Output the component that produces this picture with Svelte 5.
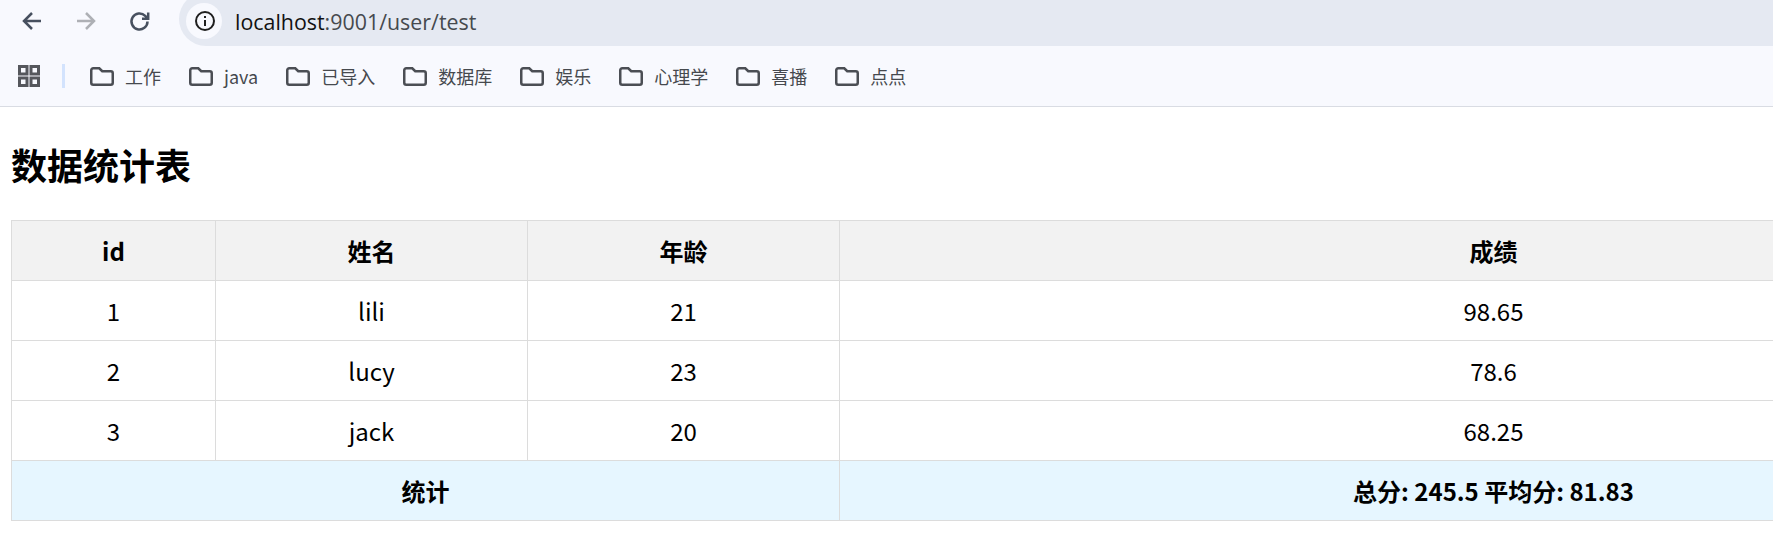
<script>
	const bookmarks = ['工作', 'java', '已导入', '数据库', '娱乐', '心理学', '喜播', '点点'];
	const rows = [
		{ id: 1, name: 'lili', age: 21, score: 98.65 },
		{ id: 2, name: 'lucy', age: 23, score: 78.6 },
		{ id: 3, name: 'jack', age: 20, score: 68.25 }
	];
	const total = 245.5;
	const average = 81.83;
</script>

<div class="chrome">
	<div class="toolbar">
		<div class="nav">
			<svg class="nav-icon" viewBox="0 0 24 24" aria-hidden="true">
				<path d="M21 12H4.5M12 4 4 12l8 8" />
			</svg>
			<svg class="nav-icon off" viewBox="0 0 24 24" aria-hidden="true">
				<path d="M3 12h16.5M12 4l8 8-8 8" />
			</svg>
			<svg class="nav-icon" viewBox="0 0 24 24" aria-hidden="true">
				<path d="M19.5 12.5a8 8 0 1 1-2.3-5.6L20 9.5M20.2 3.5v6.2H14" />
			</svg>
		</div>
		<div class="omnibox">
			<span class="site-info">
				<svg viewBox="0 0 24 24" aria-hidden="true">
					<circle cx="12" cy="12" r="9" />
					<path d="M12 11v6M12 7v2" />
				</svg>
			</span>
			<span class="url"><b>localhost</b>:9001/user/test</span>
		</div>
	</div>
	<div class="bookmarks">
		<svg class="apps" viewBox="0 0 22 22" aria-hidden="true">
			<rect x="1.5" y="1.5" width="7.5" height="7.5" />
			<rect x="13" y="1.5" width="7.5" height="7.5" />
			<rect x="1.5" y="13" width="7.5" height="7.5" />
			<rect x="13" y="13" width="7.5" height="7.5" />
		</svg>
		<span class="divider"></span>
		{#each bookmarks as label}
			<span class="bookmark">
				<svg viewBox="0 0 24 19" aria-hidden="true">
					<path d="M1.25 3.25a2 2 0 0 1 2-2h6l3 3h8.5a2 2 0 0 1 2 2v9.5a2 2 0 0 1-2 2H3.25a2 2 0 0 1-2-2z" />
				</svg>
				{label}
			</span>
		{/each}
	</div>
</div>

<main>
	<h2>数据统计表</h2>
	<table>
		<colgroup>
			<col class="c-id" />
			<col class="c-name" />
			<col class="c-age" />
			<col />
		</colgroup>
		<thead>
			<tr>
				<th>id</th>
				<th>姓名</th>
				<th>年龄</th>
				<th>成绩</th>
			</tr>
		</thead>
		<tbody>
			{#each rows as row}
				<tr>
					<td>{row.id}</td>
					<td>{row.name}</td>
					<td>{row.age}</td>
					<td>{row.score}</td>
				</tr>
			{/each}
			<tr class="summary">
				<td colspan="3">统计</td>
				<td>总分: {total} 平均分: {average}</td>
			</tr>
		</tbody>
	</table>
</main>

<style>
	:global(body) {
		overflow: hidden;
		background: #fff;
		color: #000;
		font-family: 'Noto Sans CJK SC', 'Noto Sans', sans-serif;
	}

	.chrome {
		background: #f8f9fe;
		border-bottom: 1px solid #d9dce3;
		height: 107px;
		box-sizing: border-box;
		overflow: hidden;
	}

	.toolbar {
		display: flex;
		height: 46px;
		padding-left: 20px;
	}

	.nav {
		display: flex;
		gap: 30px;
		align-items: center;
		height: 42px;
		width: 159px;
		flex: none;
	}

	.nav-icon {
		width: 24px;
		height: 24px;
		fill: none;
		stroke: #47505f;
		stroke-width: 2.5;
	}

	.nav-icon.off {
		stroke: #aeb0b5;
	}

	.omnibox {
		flex: 1;
		display: flex;
		align-items: center;
		gap: 13px;
		height: 54px;
		margin-top: -8px;
		padding: 8px 0 0 7px;
		box-sizing: border-box;
		background: #e5e9f2;
		border-radius: 27px 0 0 27px;
	}

	.site-info {
		display: flex;
		align-items: center;
		justify-content: center;
		width: 36px;
		height: 36px;
		margin-top: -4px;
		padding-left: 2px;
		box-sizing: border-box;
		border-radius: 50%;
		background: #f8f9fe;
	}

	.site-info svg {
		width: 24px;
		height: 24px;
		flex: none;
		fill: none;
		stroke: #1f1f1f;
		stroke-width: 2;
	}

	.url {
		font: 21.4px 'Open Sans', sans-serif;
		color: #46494e;
		margin-top: -4px;
	}

	.url b {
		font-weight: 400;
		color: #111;
	}

	.bookmarks {
		display: flex;
		align-items: center;
		height: 60px;
		padding-left: 18px;
	}

	.apps {
		width: 22px;
		height: 22px;
		fill: none;
		stroke: #55575c;
		stroke-width: 3;
	}

	.divider {
		width: 3px;
		height: 24px;
		margin: 0 25px 0 22px;
		background: #d3e3fd;
	}

	.bookmark {
		display: flex;
		align-items: center;
		gap: 11px;
		margin-right: 28px;
		font-size: 18px;
		color: #46494e;
	}

	.bookmark svg {
		width: 24px;
		height: 19px;
		fill: none;
		stroke: #4b4e54;
		stroke-width: 2.5;
	}

	main {
		padding: 0 11px;
	}

	h2 {
		margin: 0;
		padding: 31px 0 30px;
		font-size: 36px;
		line-height: 52px;
		font-weight: 700;
	}

	table {
		width: 2137px;
		table-layout: fixed;
		border-collapse: collapse;
		font-size: 24px;
	}

	.c-id {
		width: 204px;
	}

	.c-name,
	.c-age {
		width: 312px;
	}

	th,
	td {
		height: 60px;
		padding: 0;
		box-sizing: border-box;
		border: 1px solid #dcdcdc;
		text-align: center;
	}

	th {
		background: #f2f2f2;
		font-weight: 700;
	}

	.summary td {
		background: #e6f6ff;
		font-weight: 700;
	}
</style>
